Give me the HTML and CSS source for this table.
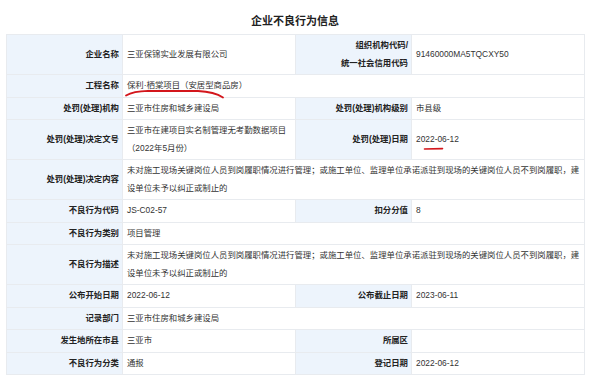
FILE: index.html
```html
<!DOCTYPE html>
<html lang="zh-CN">
<head>
<meta charset="utf-8">
<title>企业不良行为信息</title>
<link rel="stylesheet" href="styles.css">
</head>
<body>
<div class="page">
  <h1 class="title">企业不良行为信息</h1>
  <table class="info">
    <colgroup>
      <col class="c-label">
      <col class="c-value">
      <col class="c-label">
      <col class="c-value">
    </colgroup>
    <tbody>
      <tr>
        <th>企业名称</th>
        <td>三亚保锦实业发展有限公司</td>
        <th>组织机构代码/<br>统一社会信用代码</th>
        <td>91460000MA5TQCXY50</td>
      </tr>
      <tr>
        <th>工程名称</th>
        <td colspan="3">保利·栖棠项目（安居型商品房）</td>
      </tr>
      <tr>
        <th>处罚(处理)机构</th>
        <td>三亚市住房和城乡建设局</td>
        <th>处罚(处理)机构级别</th>
        <td>市县级</td>
      </tr>
      <tr>
        <th>处罚(处理)决定文号</th>
        <td>三亚市在建项目实名制管理无考勤数据项目（2022年5月份）</td>
        <th>处罚(处理)日期</th>
        <td>2022-06-12</td>
      </tr>
      <tr>
        <th>处罚(处理)决定内容</th>
        <td colspan="3">未对施工现场关键岗位人员到岗履职情况进行管理；或施工单位、监理单位承诺派驻到现场的关键岗位人员不到岗履职，建设单位未予以纠正或制止的</td>
      </tr>
      <tr>
        <th>不良行为代码</th>
        <td>JS-C02-57</td>
        <th>扣分分值</th>
        <td>8</td>
      </tr>
      <tr>
        <th>不良行为类别</th>
        <td colspan="3">项目管理</td>
      </tr>
      <tr>
        <th>不良行为描述</th>
        <td colspan="3">未对施工现场关键岗位人员到岗履职情况进行管理；或施工单位、监理单位承诺派驻到现场的关键岗位人员不到岗履职，建设单位未予以纠正或制止的</td>
      </tr>
      <tr>
        <th>公布开始日期</th>
        <td>2022-06-12</td>
        <th>公布截止日期</th>
        <td>2023-06-11</td>
      </tr>
      <tr>
        <th>记录部门</th>
        <td colspan="3">三亚市住房和城乡建设局</td>
      </tr>
      <tr>
        <th>发生地所在市县</th>
        <td>三亚市</td>
        <th>所属区</th>
        <td></td>
      </tr>
      <tr>
        <th>不良行为分类</th>
        <td>通报</td>
        <th>登记日期</th>
        <td>2022-06-12</td>
      </tr>
    </tbody>
  </table>
  <svg class="marks" width="600" height="380" viewBox="0 0 600 380" aria-hidden="true">
    <path d="M126 95.5 C131 92.5 138 91 148 90.8 L198 91 C210 91.5 217 93.5 223 97.5" fill="none" stroke="#d3161c" stroke-width="1.8" stroke-linecap="round"/>
    <path d="M424.5 149 L442.5 148.6" fill="none" stroke="#d3161c" stroke-width="1.6" stroke-linecap="round"/>
  </svg>
</div>
</body>
</html>
```
FILE: styles.css
```css
html, body {
  margin: 0;
  padding: 0;
  background: #ffffff;
}

.page {
  position: relative;
  width: 600px;
  height: 380px;
  padding: 0 16px 0 6px;
  box-sizing: border-box;
  font-family: "Liberation Sans", "Noto Sans CJK SC", sans-serif;
  font-size: 8.4px;
  color: #333333;
}

.title {
  margin: 0;
  padding-top: 14px;
  margin-bottom: 5px;
  height: 15px;
  line-height: 15px;
  font-size: 11px;
  font-weight: bold;
  color: #222222;
  text-align: center;
}

.info {
  width: 578px;
  table-layout: fixed;
  border-collapse: collapse;
  border: 1px solid #e6e9ed;
}

.c-label {
  width: 116px;
}

.c-value {
  width: 173px;
}

.info th,
.info td {
  border: 1px solid #e8ebef;
  padding: 2px 4px 2px 4px;
  line-height: 17.5px;
  vertical-align: middle;
  word-break: break-all;
}

.info th {
  background: #edf4fc;
  font-weight: bold;
  color: #222222;
  text-align: right;
  padding-right: 3px;
}

.info td {
  background: #ffffff;
  text-align: left;
  padding-left: 4px;
  padding-right: 1px;
}

.marks {
  position: absolute;
  left: 0;
  top: 0;
  pointer-events: none;
}
```
